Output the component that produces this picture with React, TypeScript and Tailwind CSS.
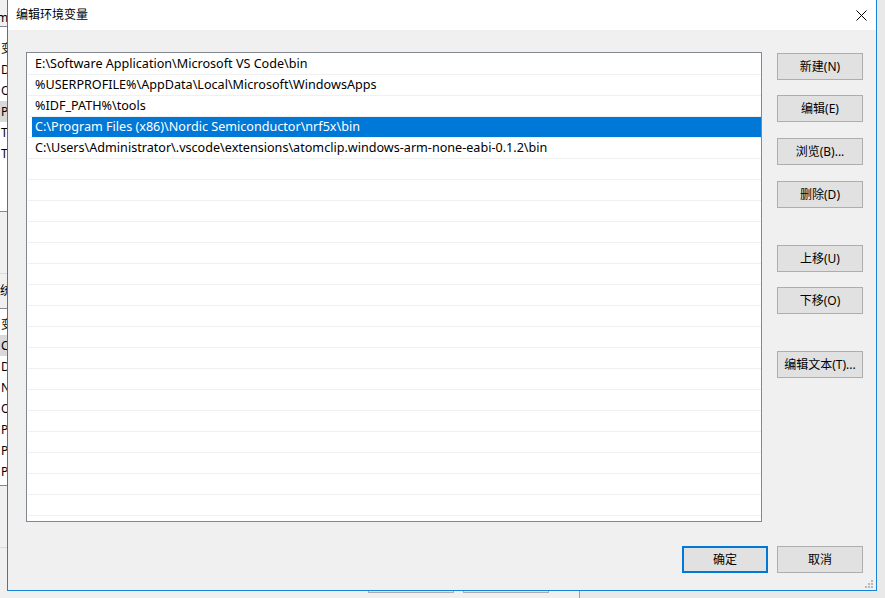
import React from "react";

const font = { fontFamily: '"Noto Sans", "Noto Sans CJK SC", sans-serif' };

const paths = [
  "E:\\Software Application\\Microsoft VS Code\\bin",
  "%USERPROFILE%\\AppData\\Local\\Microsoft\\WindowsApps",
  "%IDF_PATH%\\tools",
  "C:\\Program Files (x86)\\Nordic Semiconductor\\nrf5x\\bin",
  "C:\\Users\\Administrator\\.vscode\\extensions\\atomclip.windows-arm-none-eabi-0.1.2\\bin",
];

const userVars = ["变量", "DriverData", "OneDrive", "Path", "TEMP", "TMP"];
const sysVars = [
  "变量",
  "ComSpec",
  "DriverData",
  "NUMBER_OF_PROCESSORS",
  "OS",
  "Path",
  "PATHEXT",
  "PROCESSOR_ARCHITECTURE",
];

// window behind the dialog, only a thin strip of it shows
function BackWindow() {
  return (
    <div className="absolute left-0 top-0 flex h-[598px] w-[580px] flex-col border-r border-[#a0a0a0] bg-[#f0f0f0] text-[12px] leading-[16px] text-black">
      <div className="flex h-[26px] w-[7px] items-center overflow-hidden whitespace-nowrap pt-[10px]">
        <span className="-ml-[3px]">m</span>
      </div>
      <div className="h-[186px] overflow-hidden border-y border-[#828790] bg-white pt-[11px]">
        {userVars.map((v, i) => (
          <div
            key={v}
            className={`flex h-[21px] items-center ${i === 3 ? "bg-[#d9d9d9]" : ""}`}
          >
            <span className="w-[7px] overflow-hidden whitespace-nowrap pl-px">{v}</span>
          </div>
        ))}
      </div>
      <div className="h-[61px]" />
      <div className="flex h-[35px] items-center border-t border-[#dcdcdc]">
        <span className="w-[7px] overflow-hidden whitespace-nowrap">
          <span className="-ml-[12px] inline-block">系统变量(S)</span>
        </span>
      </div>
      <div className="h-[178px] overflow-hidden border-y border-[#828790] bg-white pt-[5px]">
        {sysVars.map((v, i) => (
          <div
            key={v}
            className={`flex h-[21px] items-center ${i === 1 ? "bg-[#d9d9d9]" : ""}`}
          >
            <span className="w-[7px] overflow-hidden whitespace-nowrap pl-px">{v}</span>
          </div>
        ))}
      </div>
      <div className="h-[61px]" />
      <div className="border-t border-[#dcdcdc] pt-[18px]">
        <div className="flex gap-[9px] pl-[368px]">
          <div className="h-[27px] w-[86px] border border-[#adadad] bg-[#e1e1e1]" />
          <div className="h-[27px] w-[86px] border border-[#adadad] bg-[#e1e1e1]" />
        </div>
      </div>
    </div>
  );
}

function Btn({ label, className = "" }: { label: string; className?: string }) {
  return (
    <div
      className={`flex h-[27px] w-[86px] items-center justify-center border border-[#adadad] bg-[#e1e1e1] text-[12px] leading-[16px] text-black ${className}`}
    >
      {label}
    </div>
  );
}

function Grip() {
  const dots = [
    [6, 0],
    [3, 3],
    [6, 3],
    [0, 6],
    [3, 6],
    [6, 6],
  ];
  return (
    <svg width="8" height="8" viewBox="0 0 8 8" className="absolute bottom-[2px] right-[3px]">
      {dots.map(([x, y]) => (
        <rect key={`${x}-${y}`} x={x} y={y} width="2" height="2" fill="#b8b8b8" />
      ))}
    </svg>
  );
}

export default function App() {
  const rows = Array.from({ length: 23 }, (_, i) => paths[i] ?? "");

  return (
    <div className="relative h-[598px] w-[885px] overflow-hidden bg-[#e9e9e9]" style={font}>
      <BackWindow />

      <div className="absolute left-[7px] top-0 flex h-[591px] w-[870px] flex-col border-x border-b border-[#1883d7] bg-[#f0f0f0]">
        <div className="flex h-[30px] shrink-0 items-center justify-between bg-white pl-[8px] pr-[9px]">
          <span className="text-[12px] leading-[16px] text-black">编辑环境变量</span>
          <svg width="11" height="11" viewBox="0 0 11 11">
            <path d="M0.5 0.5 L10.5 10.5 M10.5 0.5 L0.5 10.5" stroke="#000" strokeWidth="1" />
          </svg>
        </div>

        <div className="relative flex flex-1 flex-col pl-[18px] pr-[13px] pt-[22px]">
          <div className="flex">
            <div className="h-[470px] w-[736px] overflow-hidden border border-[#828790] bg-white pl-px pt-px">
              {rows.map((p, i) => (
                <div key={i} className="flex h-[21px] border-b border-[#f0f0f0]">
                  <div
                    className={`ml-[4px] flex flex-1 items-center whitespace-nowrap pl-[3px] text-[12.6px] leading-[16px] ${
                      i === 3 ? "bg-[#0078d7] text-white" : "text-black"
                    }`}
                  >
                    {p}
                  </div>
                </div>
              ))}
            </div>

            <div className="ml-[15px] flex w-[86px] flex-col pt-px">
              <Btn label="新建(N)" />
              <Btn label="编辑(E)" className="mt-[15px]" />
              <Btn label="浏览(B)..." className="mt-[16px]" />
              <Btn label="删除(D)" className="mt-[16px]" />
              <Btn label="上移(U)" className="mt-[37px]" />
              <Btn label="下移(O)" className="mt-[15px]" />
              <Btn label="编辑文本(T)..." className="mt-[37px]" />
            </div>
          </div>

          <div className="mt-[24px] flex justify-end gap-[9px]">
            <div className="flex h-[27px] w-[86px] items-center justify-center border-2 border-[#0078d7] bg-[#e1e1e1] text-[12px] leading-[16px] text-black">
              确定
            </div>
            <Btn label="取消" />
          </div>

          <Grip />
        </div>
      </div>
    </div>
  );
}
